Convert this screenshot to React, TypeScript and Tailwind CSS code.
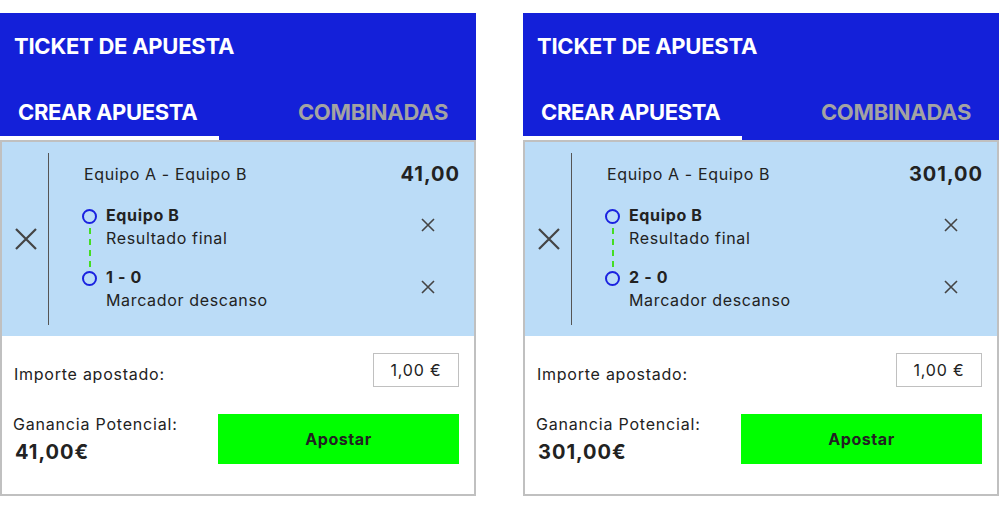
import React from "react";

const BigX = () => (
  <svg width="24" height="24" viewBox="0 0 24 24" fill="none" stroke="#444" strokeWidth="2.2" strokeLinecap="butt">
    <path d="M2 2 L22 22 M22 2 L2 22" />
  </svg>
);

const SmallX = () => (
  <svg width="14" height="14" viewBox="0 0 14 14" fill="none" stroke="#444" strokeWidth="1.6">
    <path d="M1 1 L13 13 M13 1 L1 13" />
  </svg>
);

const Circle = () => (
  <div className="w-[15px] h-[15px] rounded-full border-2 border-[#1a22e0] shrink-0" />
);

function Selection({ title, sub, first }: { title: string; sub: string; first?: boolean }) {
  return (
    <div className="flex items-center">
      <div className="flex flex-1 items-start -ml-[2px]">
        <div className="relative w-[15px] shrink-0 mt-[5px] mr-[9px] flex justify-center">
          <Circle />
          {first && (
            <div className="absolute left-[6.5px] top-[19px] h-[39px] border-l-2 border-dashed border-[#44dd22]" />
          )}
        </div>
        <div className="flex flex-col tracking-[0.65px]">
          <span className="text-[16px] leading-[23px] font-bold text-[#222]">{title}</span>
          <span className="text-[16px] leading-[22px] text-[#222]">{sub}</span>
        </div>
      </div>
      <div className="mr-[24px] mb-[4px]">
        <SmallX />
      </div>
    </div>
  );
}

function Ticket({ odds, score, gain }: { odds: string; score: string; gain: string }) {
  return (
    <div className="w-[476px] flex flex-col">
      <div className="bg-[#1420d9] flex flex-col">
        <div className="h-[67px] flex items-center pl-[14px]">
          <span className="text-white font-bold text-[22px] tracking-[-0.25px]">TICKET DE APUESTA</span>
        </div>
        <div className="h-[60px] flex items-end justify-between">
          <div className="w-[219px] h-[60px] border-b-4 border-white flex items-center pl-[18px] pt-[9px]">
            <span className="text-white font-bold text-[22px] tracking-[-0.36px]">CREAR APUESTA</span>
          </div>
          <div className="h-[60px] flex items-center pr-[28px] pt-[5px]">
            <span className="text-[#a3a3a3] font-bold text-[22px] tracking-[-0.3px]">COMBINADAS</span>
          </div>
        </div>
      </div>
      <div className="border-2 border-[#c0c0c0] flex flex-col">
        <div className="bg-[#bbdcf7] flex h-[194px]">
          <div className="w-[46px] flex items-center justify-center pl-[1px]">
            <BigX />
          </div>
          <div className="w-px bg-[#555] my-[11px]" />
          <div className="flex-1 flex flex-col pl-[35px] pr-[15px] pt-[20px]">
            <div className="flex justify-between items-center h-[24px]">
              <span className="text-[16px] text-[#222] tracking-[0.63px]">Equipo A - Equipo B</span>
              <span className="text-[20px] font-bold text-[#222] tracking-[1px] -mr-[1px]">{odds}</span>
            </div>
            <div className="mt-[18px]">
              <Selection title="Equipo B" sub="Resultado final" first />
            </div>
            <div className="mt-[17px]">
              <Selection title={score} sub="Marcador descanso" />
            </div>
          </div>
        </div>
        <div className="bg-white h-[158px] flex flex-col pl-[12px] pr-[15px] pt-[17px]">
          <div className="flex justify-between items-end">
            <span className="text-[16px] text-[#222] leading-[20px] mb-[3px] tracking-[0.75px]">Importe apostado:</span>
            <div className="w-[86px] h-[34px] border border-[#c0c0c0] flex items-center justify-center text-[16px] text-[#222] tracking-[0.8px]">
              1,00 €
            </div>
          </div>
          <div className="flex justify-between mt-[27px]">
            <div className="flex flex-col -ml-[1px]">
              <span className="text-[16px] text-[#222] leading-[20px] tracking-[0.8px]">Ganancia Potencial:</span>
              <span className="text-[20px] font-bold text-[#222] mt-[5px] ml-[2px] leading-[26px] tracking-[1px]">{gain}</span>
            </div>
            <button className="w-[241px] h-[50px] bg-[#00ff00] flex items-center justify-center text-[16px] font-bold text-[#222] tracking-[0.55px] pb-[1px]">
              Apostar
            </button>
          </div>
        </div>
      </div>
    </div>
  );
}

export default function App() {
  return (
    <div className="w-[1000px] h-[510px] bg-white pt-[13px] flex gap-[47px]" style={{ fontFamily: "Inter, 'Noto Sans', sans-serif" }}>
      <Ticket odds="41,00" score="1 - 0" gain="41,00€" />
      <Ticket odds="301,00" score="2 - 0" gain="301,00€" />
    </div>
  );
}
